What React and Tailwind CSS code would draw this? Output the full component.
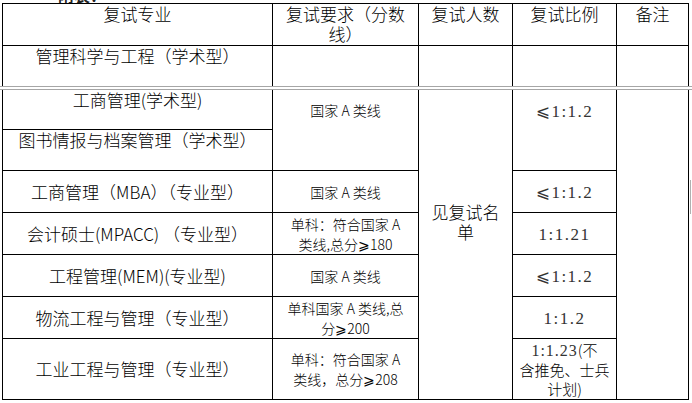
export default function App() {
  const cell = 'border border-black p-0 text-center'
  const num = "font-['Liberation_Serif','DejaVu_Sans','Noto_Sans_CJK_SC',serif] font-normal tracking-[1.5px] text-[17px] text-[#333]"
  const small = 'text-[14px] leading-[20px]'

  return (
    <div className="relative w-[692px] h-[403px] overflow-hidden bg-white text-black font-['Noto_Sans_CJK_SC',sans-serif] font-light">
      {/* cut-off line above the table */}
      <div className="h-[3px] overflow-hidden">
        <div className="-mt-[13px] pl-[58px] text-[16px] leading-[16px] font-bold text-[#222]">附表：</div>
      </div>

      <table className="table-fixed border-collapse w-[686px] ml-[2px] text-[17px] leading-[20px]">
        <colgroup>
          <col className="w-[270px]" />
          <col className="w-[146px]" />
          <col className="w-[94px]" />
          <col className="w-[104px]" />
          <col className="w-[72px]" />
        </colgroup>
        <tbody>
          <tr>
            <td className={`${cell} h-[42px] align-top`}>复试专业</td>
            <td className={`${cell} align-top`}>复试要求（分数<br />线）</td>
            <td className={`${cell} align-top`}>复试人数</td>
            <td className={`${cell} align-top`}>复试比例</td>
            <td className={`${cell} align-top`}>备注</td>
          </tr>
          <tr>
            <td className={`${cell} border-b-0 h-[40px] align-top`}>管理科学与工程（学术型）</td>
            <td className={`${cell} border-b-0`}></td>
            <td className={`${cell} border-b-0`}></td>
            <td className={`${cell} border-b-0`}></td>
            <td className={`${cell} border-b-0`}></td>
          </tr>
        </tbody>
      </table>

      <div className="h-[4px] border-t border-b border-[#a6a6a6]" />

      <table className="table-fixed border-collapse w-[686px] ml-[2px] text-[17px] leading-[20px]">
        <colgroup>
          <col className="w-[270px]" />
          <col className="w-[146px]" />
          <col className="w-[94px]" />
          <col className="w-[104px]" />
          <col className="w-[72px]" />
        </colgroup>
        <tbody>
          <tr>
            <td className={`${cell} border-t-0 h-[40px] align-top`}>工商管理(学术型)</td>
            <td rowSpan={2} className={`${cell} border-t-0 align-top pt-[10px] ${small}`}>国家 A 类线</td>
            <td rowSpan={7} className={`${cell} border-t-0 align-top pt-[112px]`}>见复试名<br />单</td>
            <td rowSpan={2} className={`${cell} border-t-0 align-top pt-[10px]`}><span className={num}>⩽1:1.2</span></td>
            <td rowSpan={7} className={`${cell} border-t-0`}></td>
          </tr>
          <tr>
            <td className={`${cell} h-[41px] align-top`}>图书情报与档案管理（学术型）</td>
          </tr>
          <tr>
            <td className={`${cell} h-[42px] align-middle`}>工商管理（MBA）（专业型）</td>
            <td className={`${cell} align-middle ${small}`}>国家 A 类线</td>
            <td className={`${cell} align-middle`}><span className={num}>⩽1:1.2</span></td>
          </tr>
          <tr>
            <td className={`${cell} h-[42px] align-middle`}>会计硕士(MPACC) （专业型）</td>
            <td className={`${cell} align-middle ${small}`}>单科：符合国家 A<br />类线,总分⩾180</td>
            <td className={`${cell} align-middle`}><span className={num}>1:1.21</span></td>
          </tr>
          <tr>
            <td className={`${cell} h-[42px] align-middle`}>工程管理(MEM)(专业型)</td>
            <td className={`${cell} align-middle ${small}`}>国家 A 类线</td>
            <td className={`${cell} align-middle`}><span className={num}>⩽1:1.2</span></td>
          </tr>
          <tr>
            <td className={`${cell} h-[42px] align-middle`}>物流工程与管理（专业型）</td>
            <td className={`${cell} align-middle ${small}`}>单科国家 A 类线,总<br />分⩾200</td>
            <td className={`${cell} align-middle`}><span className={num}>1:1.2</span></td>
          </tr>
          <tr>
            <td className={`${cell} h-[61px] align-middle`}>工业工程与管理（专业型）</td>
            <td className={`${cell} align-middle ${small}`}>单科：符合国家 A<br />类线，总分⩾208</td>
            <td className={`${cell} align-middle text-[15px] leading-[19px]`}>
              <span className="font-['Liberation_Serif',serif] font-normal tracking-[1px] text-[16px] text-[#333]">1:1.23</span>(不<br />含推免、士兵<br />计划)
            </td>
          </tr>
        </tbody>
      </table>

      {/* cut-off line below the table */}
      <div className="pt-[2px] pl-[20px] text-[15px] leading-[16px] text-[#777] whitespace-nowrap">
        注：复试名单及具体复试安排另行通知，请考生及时关注学院网站发布的相关信息。
      </div>

      {/* page edge mark on the right */}
      <div className="absolute left-[690px] top-[180px] h-[34px] w-px bg-[#b0b0b0]" />
    </div>
  )
}
